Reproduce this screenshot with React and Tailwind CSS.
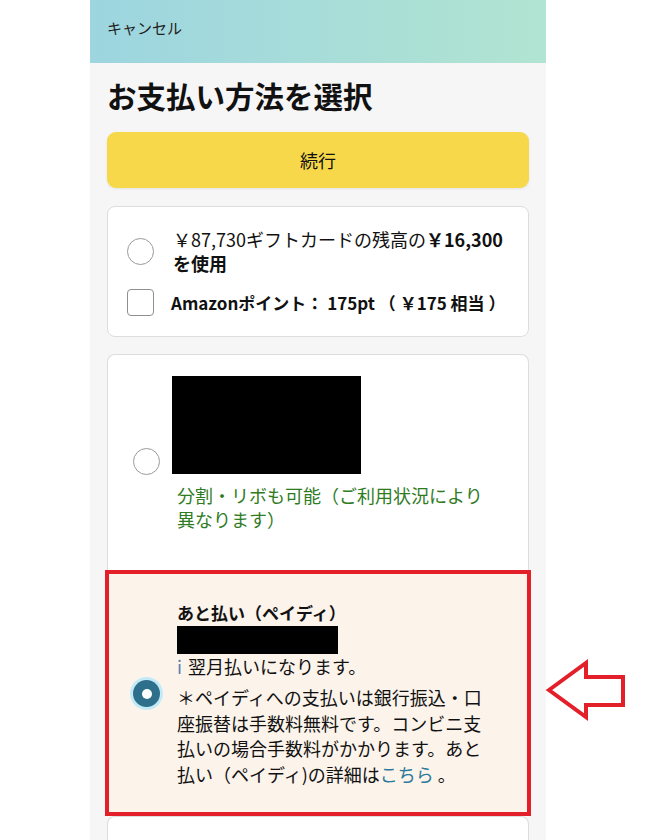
import React from 'react';

const Radio = ({ className = '' }) => (
  <div className={`w-[27px] h-[27px] shrink-0 rounded-full border-[1.5px] border-[#9a9a9a] bg-white ${className}`} />
);

export default function App() {
  return (
    <div className="relative h-[840px] overflow-hidden bg-white font-['Noto_Sans_CJK_JP','Noto_Sans',sans-serif] text-[#111]">
      <div className="ml-[90px] w-[456px] min-h-[840px] bg-[#f6f6f6]">
        {/* top bar */}
        <header className="h-[63px] bg-gradient-to-r from-[#9dd5e0] to-[#b1e4d1] px-[17px] pt-[15px]">
          <span className="text-[15px] leading-[20px] text-[#222]">キャンセル</span>
        </header>

        <div className="px-[17px]">
          <h1 className="mt-[14px] text-[29.5px] font-bold leading-[36px]">お支払い方法を選択</h1>

          <button className="mt-[19px] w-full h-[56px] rounded-[9px] bg-[#f7d84b] text-[18px] text-[#111] shadow-[0_1px_3px_rgba(0,0,0,0.08)]">
            続行
          </button>

          {/* gift card / points */}
          <div className="mt-[18px] rounded-[8px] border border-[#dddddd] bg-white pl-[19px] pr-[18px] pt-[20px] pb-[20px]">
            <div className="flex items-center gap-[19px]">
              <Radio />
              <p className="text-[18px] leading-[24px]">
                ￥87,730ギフトカードの残高の<span className="font-bold">￥16,300</span>
                <br />
                <span className="font-bold">を使用</span>
              </p>
            </div>
            <div className="mt-[14px] flex items-center gap-[17px]">
              <div className="w-[27px] h-[27px] shrink-0 rounded-[4px] border-[1.5px] border-[#8f8f8f] bg-white" />
              <p className="text-[17px] leading-[24px] font-bold whitespace-nowrap">Amazonポイント： 175pt （ ￥175 相当 ）</p>
            </div>
          </div>

          {/* card payment */}
          <div className="mt-[17px] h-[216px] rounded-t-[8px] border border-b-0 border-[#dddddd] bg-white pl-[25px] pt-[21px]">
            <div className="flex items-start gap-[12px]">
              <Radio className="mt-[72px]" />
              <div>
                <div className="w-[189px] h-[98px] bg-black" />
                <p className="mt-[9px] pl-[5px] text-[18px] leading-[24px] text-[#2f7b1f]">
                  分割・リボも可能（ご利用状況により
                  <br />
                  異なります）
                </p>
              </div>
            </div>
          </div>

          {/* paidy - selected */}
          <div className="-mx-[2px] h-[246px] border-4 border-[#e3202a] bg-[#fcf3eb] pl-[24px] pt-[27px]">
            <div className="flex items-start gap-[17px]">
              <div className="mt-[79px] w-[27px] h-[27px] shrink-0 rounded-full bg-[#2e6f8c] ring-[3px] ring-[#c4eaf7] flex items-center justify-center">
                <div className="w-[10px] h-[10px] rounded-full bg-white" />
              </div>
              <div>
                <p className="text-[17px] leading-[24px] font-bold">あと払い（ペイディ）</p>
                <div className="mt-[1px] w-[161px] h-[28px] bg-black" />
                <p className="text-[18px] leading-[24px]">
                  <span className="text-[#5b7fae] mr-[6px]">i</span>翌月払いになります。
                </p>
                <p className="mt-[7px] text-[18px] leading-[25.5px]">
                  ＊ペイディへの支払いは銀行振込・口
                  <br />
                  座振替は手数料無料です。コンビニ支
                  <br />
                  払いの場合手数料がかかります。あと
                  <br />
                  払い（ペイディ)の詳細は<span className="text-[#2b7a99]">こちら</span> 。
                </p>
              </div>
            </div>
          </div>

          <div className="h-[60px] rounded-t-[8px] border border-b-0 border-[#dddddd] bg-white" />
        </div>
      </div>

      {/* annotation arrow */}
      <svg className="absolute left-[540px] top-[655px]" width="95" height="70" viewBox="0 0 95 70">
        <polygon
          points="9,35 46,8 46,22 83,22 83,50 46,50 46,62"
          fill="white"
          stroke="#e3202a"
          strokeWidth="4"
          strokeLinejoin="miter"
        />
      </svg>
    </div>
  );
}
